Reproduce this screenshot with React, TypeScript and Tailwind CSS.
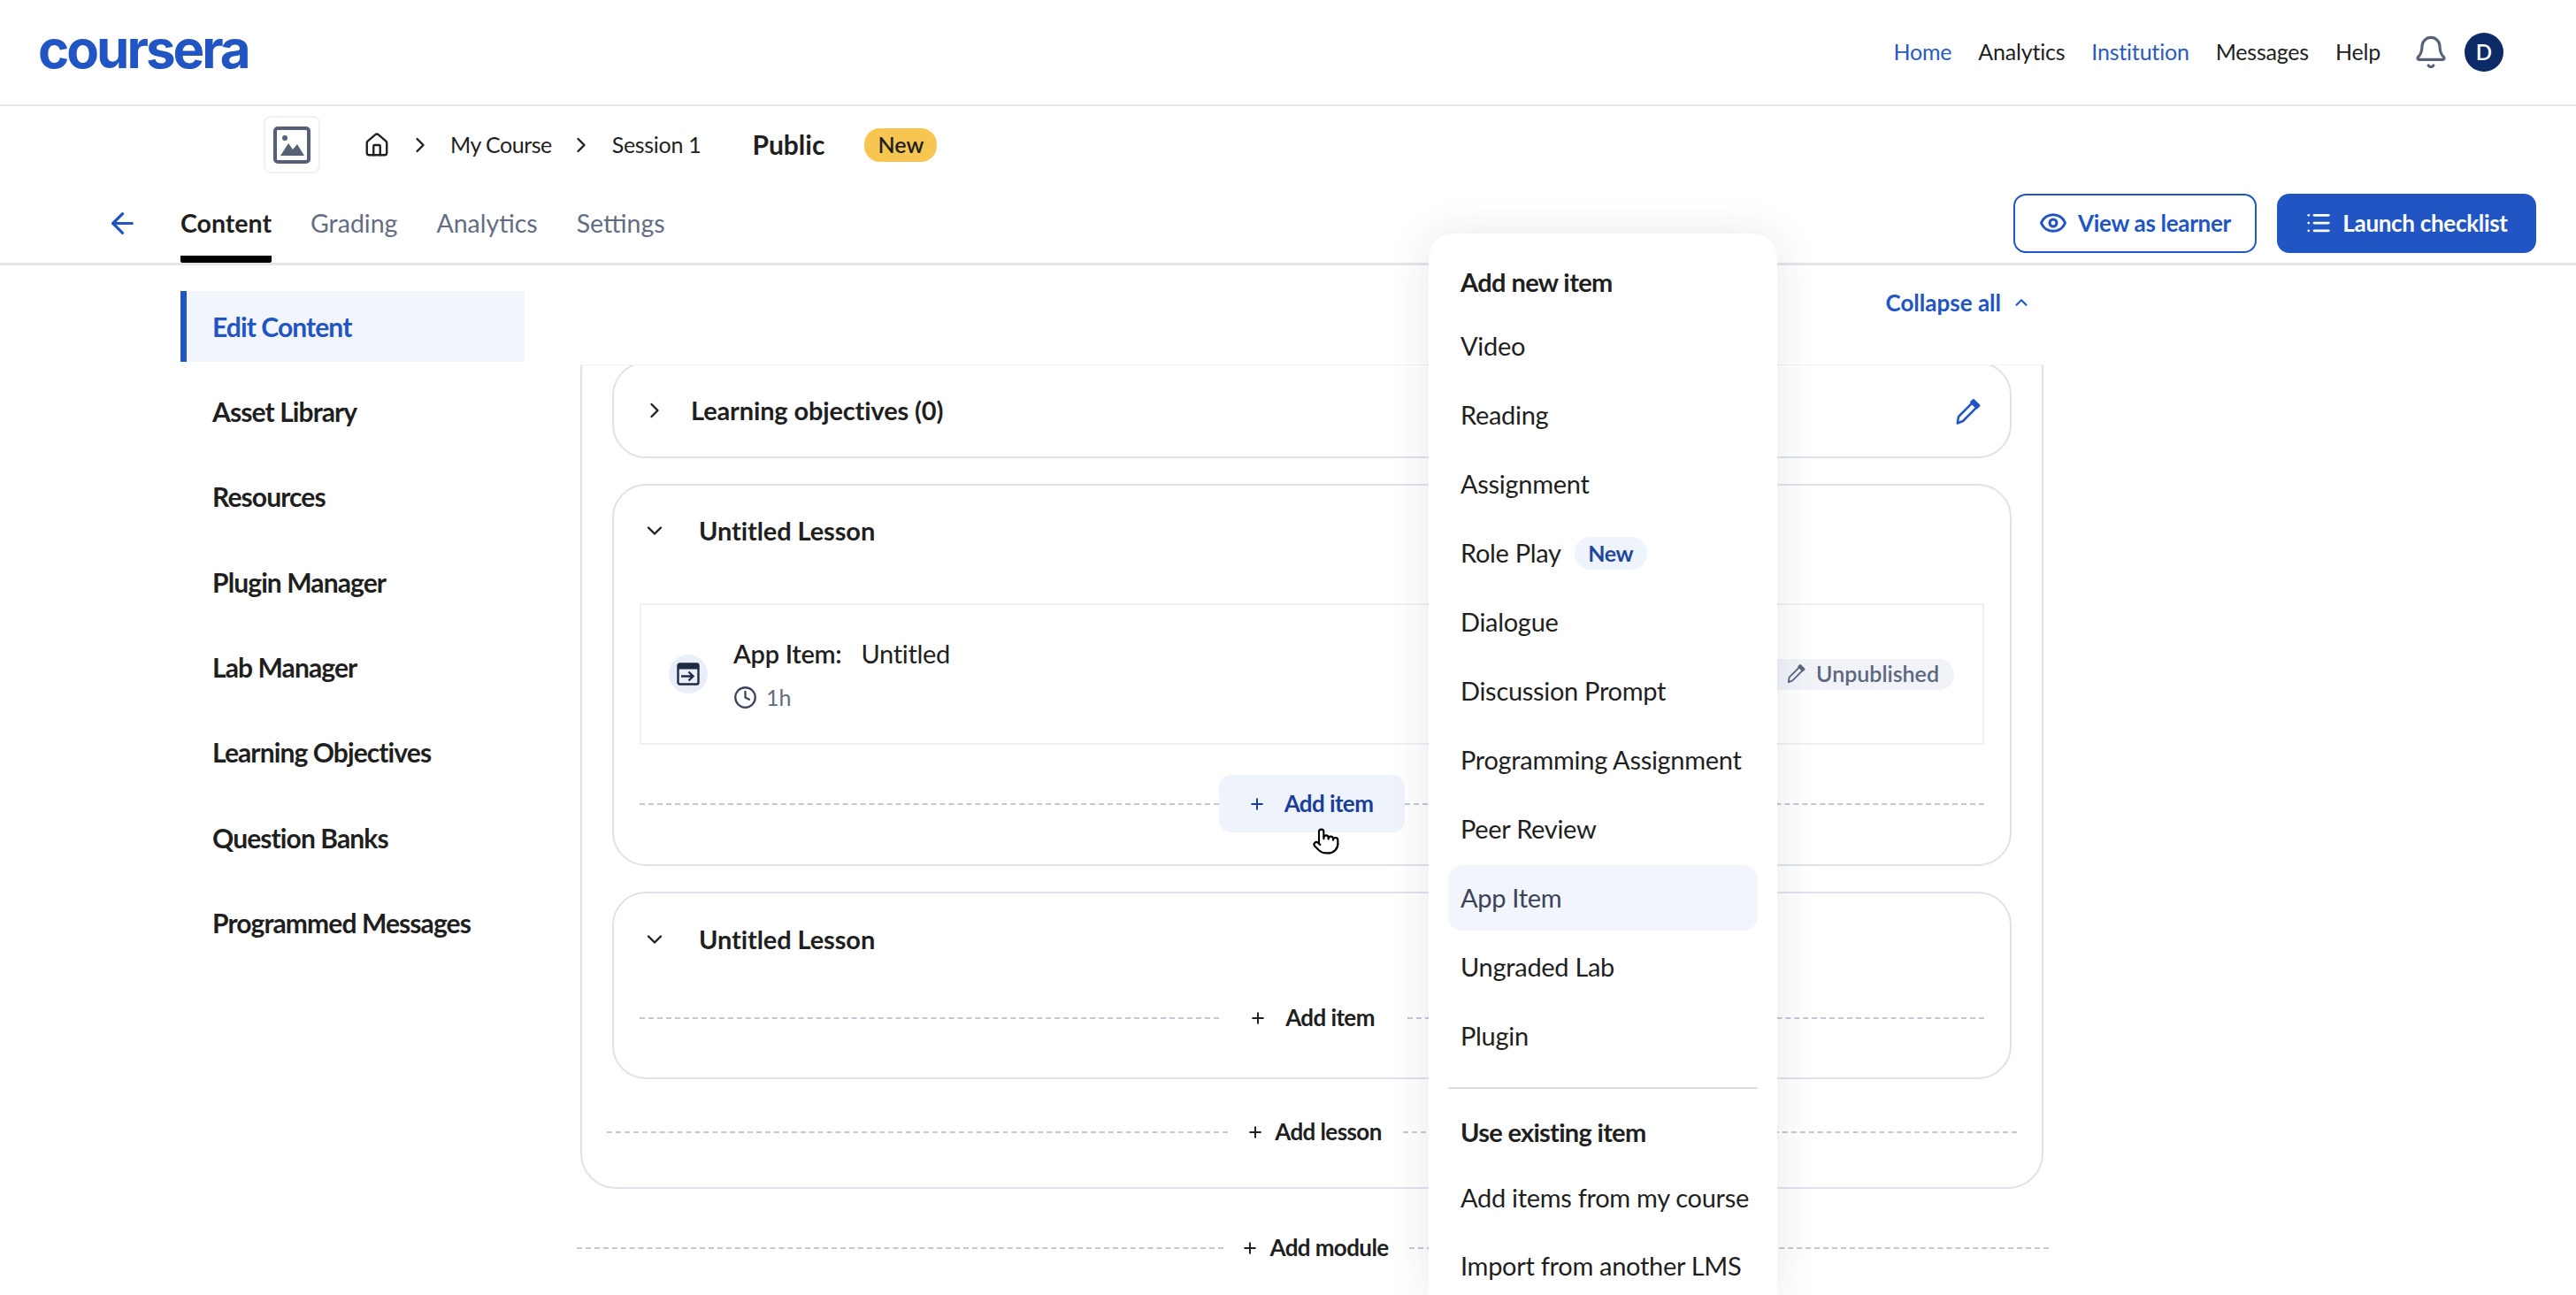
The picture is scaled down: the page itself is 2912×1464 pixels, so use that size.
import { ArrowLeft, Bell, ChevronDown, ChevronRight, ChevronUp, Clock, Eye, Home, List, Plus, Pointer } from 'lucide-react';

const navLinks = [
  { label: 'Home', active: true },
  { label: 'Analytics', active: false },
  { label: 'Institution', active: true },
  { label: 'Messages', active: false },
  { label: 'Help', active: false },
];

const sideItems = ['Asset Library', 'Resources', 'Plugin Manager', 'Lab Manager', 'Learning Objectives', 'Question Banks', 'Programmed Messages'];

const newItems = ['Video', 'Reading', 'Assignment', 'Role Play', 'Dialogue', 'Discussion Prompt', 'Programming Assignment', 'Peer Review', 'App Item', 'Ungraded Lab', 'Plugin'];

function ImageGlyph() {
  return (
    <svg viewBox="0 0 42 42" className="h-[42px] w-[42px]" fill="none">
      <rect x="2" y="2" width="38" height="38" rx="3" stroke="#566178" strokeWidth="4" />
      <circle cx="13" cy="13" r="3" fill="#566178" />
      <path d="M8 33 L17 19 L22 26 L27 20 L35 33 Z" fill="#566178" />
    </svg>
  );
}

function AppGlyph() {
  return (
    <svg viewBox="0 0 26 26" className="h-[26px] w-[26px]" fill="none">
      <rect x="1.5" y="1.5" width="23" height="23" rx="2" stroke="#1f2a44" strokeWidth="2.4" />
      <rect x="1.5" y="1.5" width="23" height="6" fill="#1f2a44" />
      <path d="M5 15.5 H18 M13.5 10.5 L18.5 15.5 L13.5 20.5" stroke="#1f2a44" strokeWidth="2.4" />
    </svg>
  );
}

// narrow pencil with a filled cap, the lucide one is too wide
function PencilGlyph({ className }: { className: string }) {
  return (
    <svg viewBox="0 0 24 24" className={className} fill="none" stroke="currentColor" strokeWidth="2" strokeLinejoin="round">
      <path d="M3 22 L4 16 L16.5 3.5 L20.5 7.5 L8 20 Z" />
      <path d="M15.5 3 L17.5 1 L22.5 6 L20.5 8 Z" fill="currentColor" />
    </svg>
  );
}

function AddRow({ label, leftClass, buttonClass, active }: { label: string; leftClass: string; buttonClass: string; active?: boolean }) {
  return (
    <div className="flex h-[65px] items-center">
      <div className={`border-t-2 border-dashed border-[#c3c8d2] ${leftClass}`} />
      <div className={`flex h-[65px] shrink-0 items-center justify-center rounded-[14px] pr-[3px] text-[26px] font-bold tracking-[-0.6px] ${buttonClass} ${active ? 'bg-[#eff4fc] text-[#1a3f9b]' : 'text-[#1f1f1f]'}`}>
        <Plus className="h-[20px] w-[20px]" strokeWidth={2.4} />
        {label}
      </div>
      <div className="flex-1 border-t-2 border-dashed border-[#c3c8d2]" />
    </div>
  );
}

export default function App() {
  return (
    <div className="relative h-[1464px] w-[2912px] overflow-hidden bg-white font-[Lato,sans-serif] text-[#1f1f1f]">
      {/* top bar */}
      <header className="flex h-[120px] items-center justify-between border-b-2 border-[#e3e5ec] pl-[43px] pr-[82px]">
        <span className="mb-[9px] font-['Inter',sans-serif] text-[60px] font-bold leading-none tracking-[-0.05em] text-[#2155c4]">coursera</span>
        <div className="flex items-center">
          <nav className="flex gap-[30px] text-[25px] tracking-[-0.2px]">
            {navLinks.map((l) => (
              <span key={l.label} className={l.active ? 'text-[#2a5bbf]' : ''}>{l.label}</span>
            ))}
          </nav>
          <Bell className="ml-[37px] h-[40px] w-[40px] text-[#566178]" strokeWidth={1.9} />
          <span className="ml-[18px] grid h-[44px] w-[44px] place-items-center rounded-full bg-[#0b2a66] text-[24px] font-semibold text-white">D</span>
        </div>
      </header>

      {/* course bar */}
      <div className="flex h-[87px] items-center pl-[298px]">
        <div className="grid h-[65px] w-[64px] place-items-center rounded-[8px] border-2 border-[#f0f1f4]">
          <ImageGlyph />
        </div>
        <Home className="ml-[49px] h-[30px] w-[30px]" strokeWidth={1.9} />
        <ChevronRight className="ml-[20px] h-[28px] w-[28px]" strokeWidth={2} />
        <span className="ml-[20px] text-[25px] tracking-[-0.5px]">My Course</span>
        <ChevronRight className="ml-[19px] h-[28px] w-[28px]" strokeWidth={2} />
        <span className="ml-[21px] text-[25px] tracking-[-0.3px]">Session 1</span>
        <span className="ml-[58px] text-[30px] font-bold">Public</span>
        <span className="ml-[45px] grid h-[38px] w-[82px] place-items-center rounded-[18px] bg-[#f6c651] text-[25px] font-semibold">New</span>
      </div>

      {/* tabs */}
      <div className="flex h-[93px] items-center justify-between border-b-[3px] border-[#e3e5ea] pl-[120px] pr-[45px]">
        <div className="flex h-full items-center">
          <ArrowLeft className="h-[37px] w-[37px] text-[#2155c4]" strokeWidth={2.1} />
          <div className="ml-[47px] flex h-full items-center gap-[44px] text-[28.5px] text-[#636d82]">
            <span className="flex h-full items-center rounded-b-[2px] border-y-[8px] border-t-transparent border-b-black font-bold text-[#1f1f1f]">Content</span>
            <span>Grading</span>
            <span>Analytics</span>
            <span>Settings</span>
          </div>
        </div>
        <div className="flex gap-[23px] text-[26px] font-bold tracking-[-0.3px]">
          <div className="flex h-[67px] w-[275px] items-center justify-center gap-[12px] rounded-[14px] border-2 border-[#2155c4] text-[#2155c4]">
            <Eye className="h-[32px] w-[32px]" strokeWidth={2.3} />
            View as learner
          </div>
          <div className="flex h-[67px] w-[293px] items-center justify-center gap-[12px] rounded-[14px] bg-[#2155c4] text-white">
            <List className="h-[30px] w-[30px]" strokeWidth={2.2} />
            Launch checklist
          </div>
        </div>
      </div>

      {/* body */}
      <div className="flex pl-[204px]">
        <aside className="flex w-[389px] shrink-0 flex-col gap-[16.4px] pt-[29px] text-[30px] font-bold tracking-[-0.9px]">
          <div className="flex h-[80px] items-center border-l-[7px] border-[#2155c4] bg-[#f3f5fd] pl-[29px] text-[#2155c4]">Edit Content</div>
          {sideItems.map((s) => (
            <div key={s} className="flex h-[80px] items-center pl-[36px]">{s}</div>
          ))}
        </aside>

        <main className="ml-[63px] w-[1654px] shrink-0">
          <div className="flex h-[84px] items-center justify-end gap-[12px] pr-[14px] text-[26px] font-bold text-[#2155c4]">
            Collapse all
            <ChevronUp className="h-[22px] w-[22px]" strokeWidth={2.2} />
          </div>

          <div className="mt-[28px] overflow-hidden border-t border-[#f1f2f5]">
            <div className="-mt-[35px] rounded-[40px] border-2 border-[#dfe2ea] px-[34px] pb-[30px] pt-[29px]">
              <div className="flex h-[109px] items-center rounded-[38px] border-2 border-[#dfe2ea] pl-[32px] pr-[33px]">
                <ChevronRight className="h-[28px] w-[28px]" strokeWidth={2} />
                <span className="ml-[27px] text-[29px] font-bold tracking-[-0.15px]">Learning objectives (0)</span>
                <PencilGlyph className="ml-auto mt-[5px] h-[30px] w-[30px] text-[#2155c4]" />
              </div>

              <section className="mt-[29px] rounded-[38px] border-2 border-[#dfe2ea] px-[29px] pb-[36px]">
                <div className="flex h-[102px] items-center">
                  <ChevronDown className="ml-[3px] h-[28px] w-[28px]" strokeWidth={2} />
                  <span className="ml-[36px] text-[29px] font-bold tracking-[-0.1px]">Untitled Lesson</span>
                </div>
                <div className="mt-[31px] flex h-[160px] items-center border-2 border-[#eef0f4] pl-[31px]">
                  <span className="grid h-[44px] w-[44px] place-items-center rounded-full bg-[#eaeef8]">
                    <AppGlyph />
                  </span>
                  <div className="ml-[29px] flex flex-col gap-[10px]">
                    <div className="flex items-center text-[29px] tracking-[-0.3px]">
                      <span className="font-semibold">App Item:</span>
                      <span className="ml-[22px]">Untitled</span>
                    </div>
                    <div className="flex items-center gap-[10px] text-[25px] text-[#636d82]">
                      <Clock className="h-[27px] w-[27px] text-[#39435a]" strokeWidth={2} />
                      1h
                    </div>
                  </div>
                  <div className="ml-auto mr-[32px] flex h-[35px] w-[218px] items-center justify-end gap-[12px] rounded-[18px] bg-[#f1f3f9] pr-[17px] text-[25px] font-semibold text-[#5b6780]">
                    <PencilGlyph className="h-[22px] w-[22px]" />
                    Unpublished
                  </div>
                </div>
                <div className="mt-[34px]">
                  <AddRow label="Add item" leftClass="w-[655px]" buttonClass="w-[210px] gap-[21px]" active />
                </div>
              </section>

              <section className="mt-[29px] rounded-[38px] border-2 border-[#dfe2ea] px-[29px] pb-[35px]">
                <div className="flex h-[104px] items-center">
                  <ChevronDown className="ml-[3px] h-[28px] w-[28px]" strokeWidth={2} />
                  <span className="ml-[36px] text-[29px] font-bold tracking-[-0.1px]">Untitled Lesson</span>
                </div>
                <div className="mt-[4px]">
                  <AddRow label="Add item" leftClass="w-[655px]" buttonClass="w-[213px] gap-[21px]" />
                </div>
              </section>

              <div className="-mx-[6px] mt-[27px]">
                <AddRow label="Add lesson" leftClass="w-[702px]" buttonClass="w-[198px] gap-[12px]" />
              </div>
            </div>
          </div>

          <div className="-ml-[4px] -mr-[6px] mt-[34px]">
            <AddRow label="Add module" leftClass="w-[731px]" buttonClass="w-[210px] gap-[12px]" />
          </div>
        </main>
      </div>

      {/* hover cursor */}
      <Pointer className="absolute left-[1483px] top-[932px] h-[38px] w-[32px] fill-white text-black" strokeWidth={1.6} />

      {/* add item menu */}
      <div className="absolute bottom-0 left-[1615px] top-[264px] w-[394px] rounded-t-[28px] bg-white text-[29px] tracking-[-0.3px] shadow-[0_0_50px_rgba(30,40,70,0.1)]">
        <div className="mt-[18px] flex h-[74px] items-center pl-[36px] font-bold tracking-[-0.6px]">Add new item</div>
        <div className="mt-[-2px] flex flex-col gap-[4px] px-[22px]">
          {newItems.map((it) => (
            <div key={it} className={`flex h-[74px] items-center rounded-[16px] pl-[14px] ${it === 'App Item' ? 'bg-[#f3f5fd] text-[#39435a]' : ''}`}>
              {it}
              {it === 'Role Play' && (
                <span className="ml-[15px] grid h-[37px] w-[82px] place-items-center rounded-[18px] bg-[#eef3fc] text-[25px] font-bold text-[#1f47a0]">New</span>
              )}
            </div>
          ))}
        </div>
        <div className="mx-[22px] mt-[21px] border-t-2 border-[#d8dce4]" />
        <div className="mt-[24px] flex h-[50px] items-center pl-[36px] font-bold tracking-[-0.7px]">Use existing item</div>
        <div className="mt-[12px] flex flex-col gap-[3px] px-[22px]">
          <div className="flex h-[74px] items-center pl-[14px]">Add items from my course</div>
          <div className="flex h-[74px] items-center pl-[14px]">Import from another LMS</div>
        </div>
      </div>
    </div>
  );
}
